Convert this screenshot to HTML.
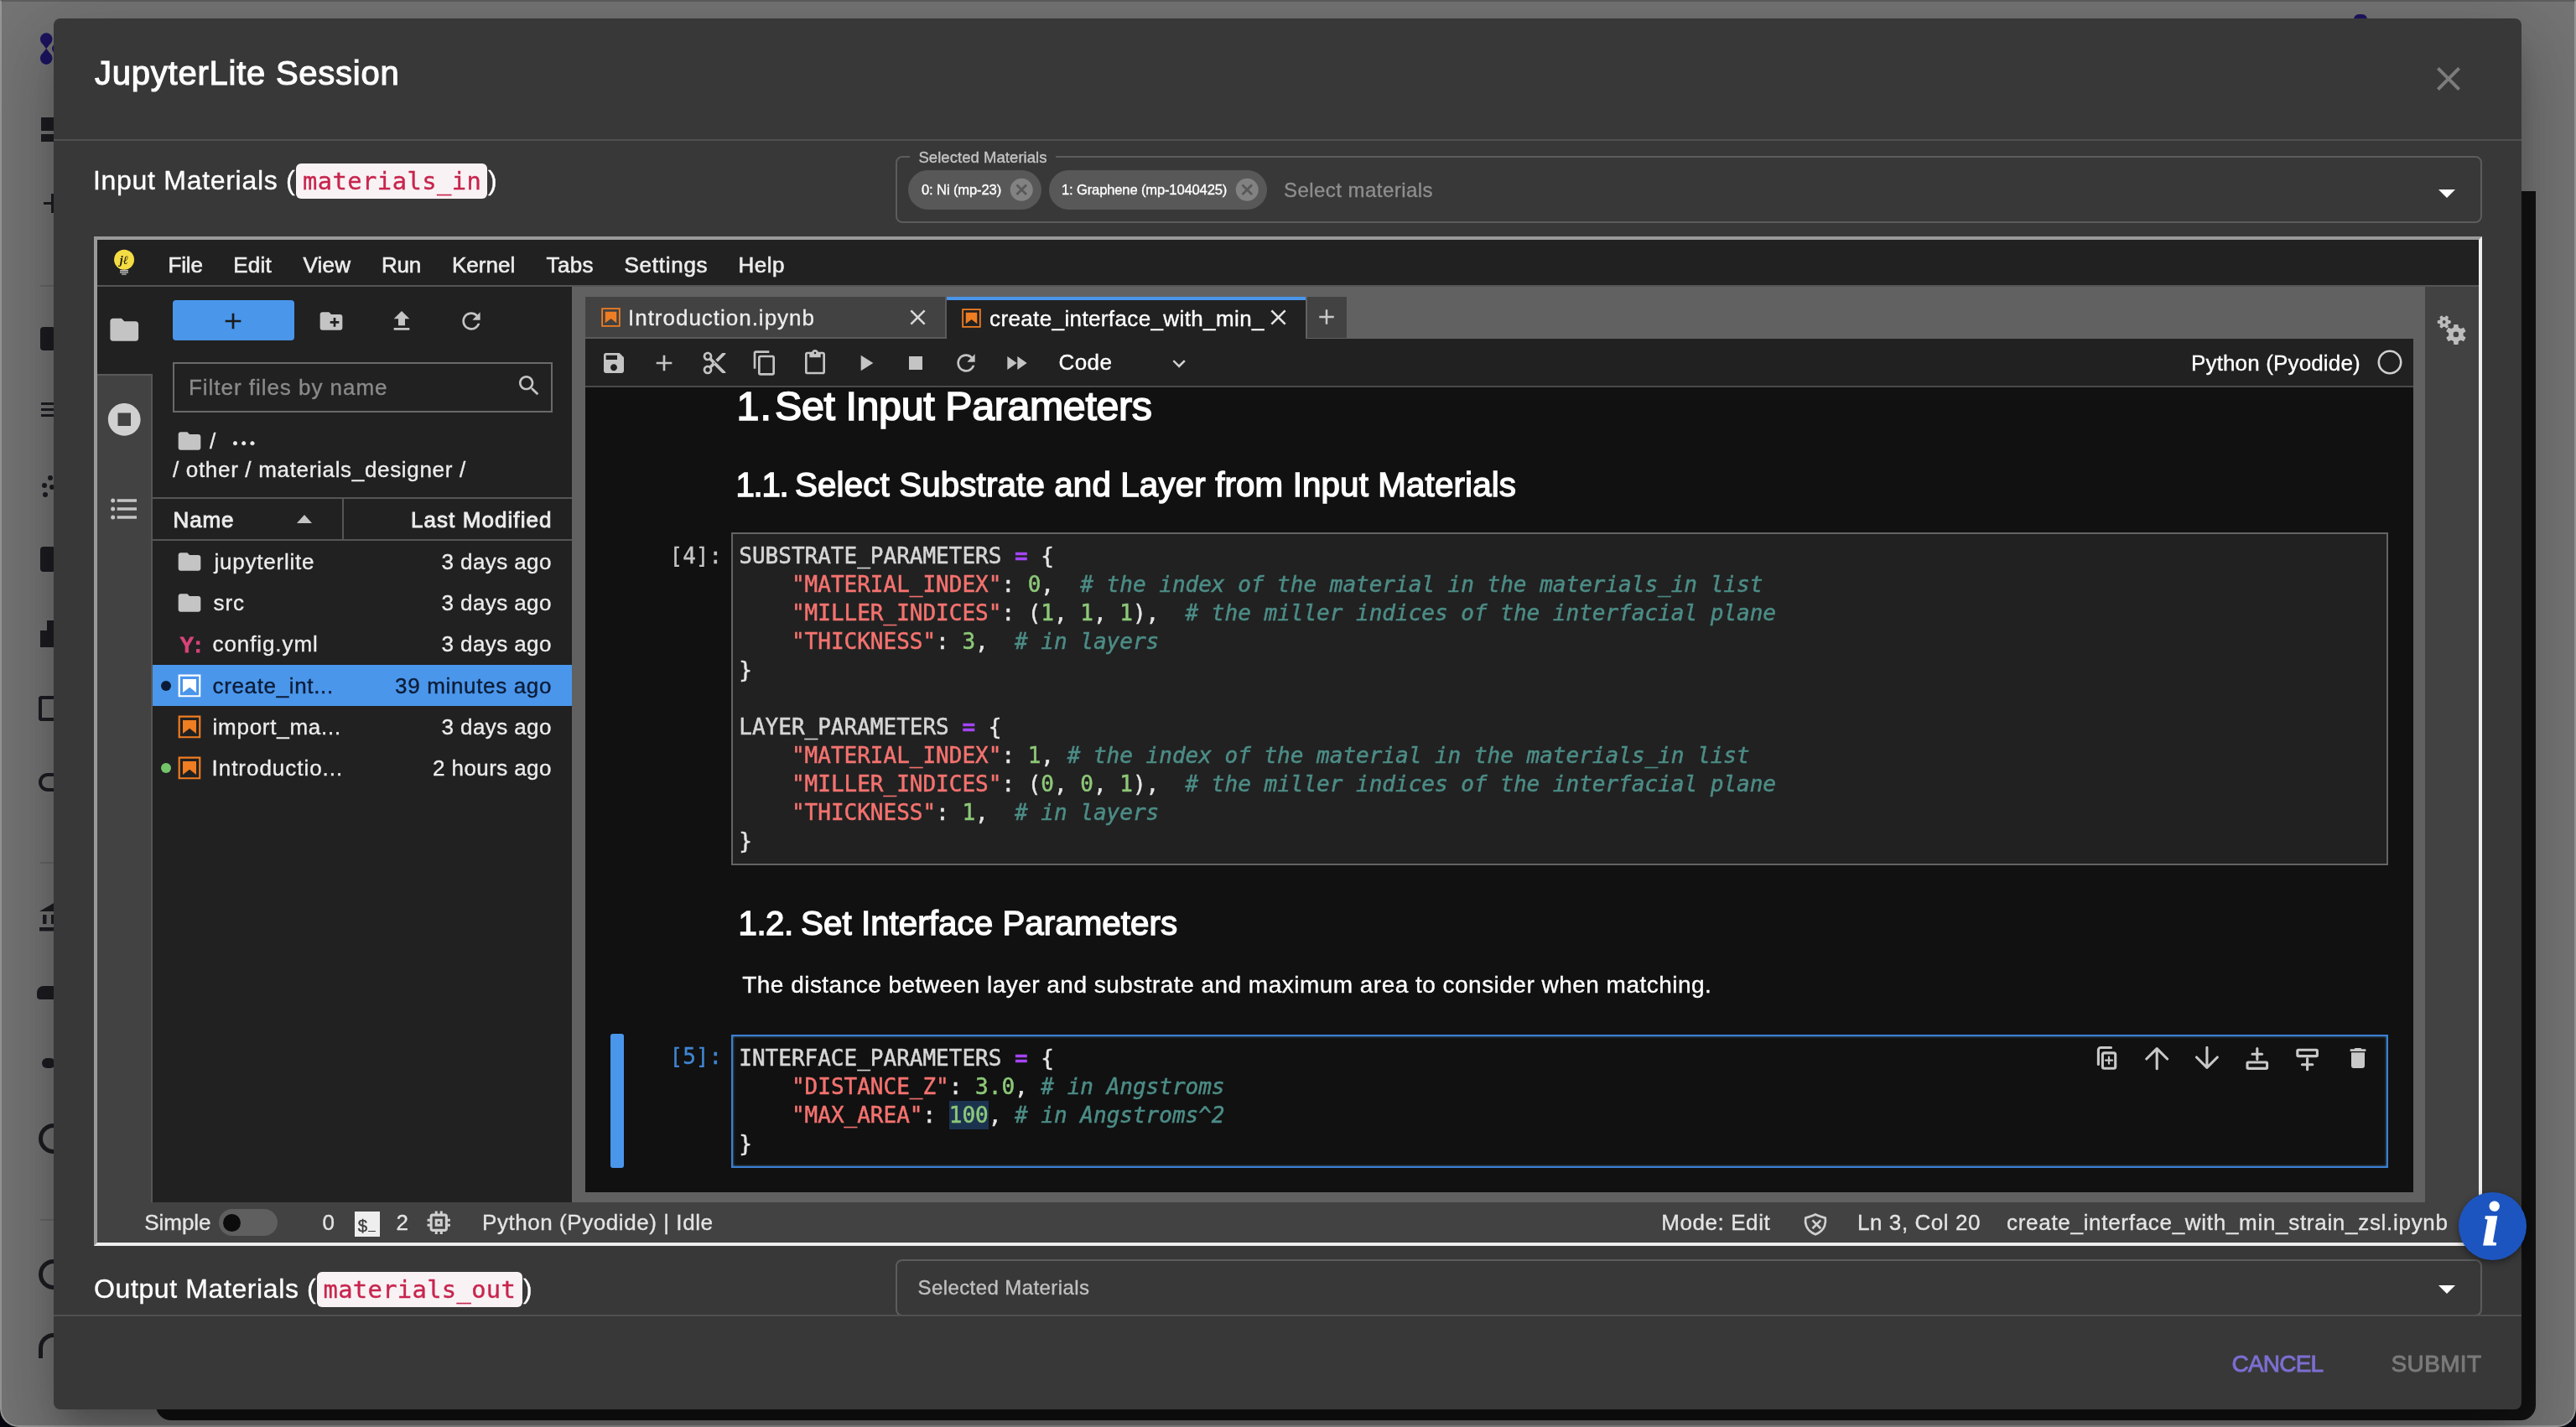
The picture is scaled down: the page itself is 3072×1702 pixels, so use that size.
<!DOCTYPE html>
<html lang="en"><head><meta charset="utf-8"><title>JupyterLite Session</title>
<style>
html,body{margin:0;padding:0}
body{width:3072px;height:1702px;position:relative;overflow:hidden;background:#07070f;filter:brightness(1.0001);font-family:"Liberation Sans",Arial,sans-serif}
body>div,body>svg,body>span{position:absolute;display:block}
.t{white-space:pre;line-height:1;-webkit-text-stroke-width:.35px}
svg{overflow:visible}
</style></head><body>
<div style="left:0px;top:0px;width:3072px;height:1702px;background:#747474;box-sizing:border-box;border:2px solid #979797;border-top-color:#5e5e5e;border-radius:0 0 22px 22px;"></div>
<div style="left:186px;top:228px;width:2838px;height:1466px;background:#131313;border-radius:0 0 18px 18px;"></div>
<svg style="left:40px;top:30px" width="30" height="56" viewBox="40 30 30 56" fill="#1d1560"><circle cx="55.2" cy="46.6" r="7.3"/><path d="M48.500 49.600L61.900 49.600L55.200 58.200Z"/><circle cx="55.2" cy="69.6" r="7.3"/><path d="M48.500 66.600L61.900 66.600L55.200 57.800Z"/><circle cx="68" cy="58" r="6"/></svg>
<div style="left:2807px;top:17px;width:16px;height:8px;background:#1d1560;border-radius:6px 6px 0 0;"></div>
<div style="left:49px;top:139.5px;width:17px;height:16.5px;background:#1c1c22;"></div>
<div style="left:49px;top:159.5px;width:17px;height:9.5px;background:#1c1c22;"></div>
<div style="left:52px;top:240.5px;width:14px;height:3.3px;background:#1c1c22;"></div>
<div style="left:61.2px;top:230.5px;width:3.3px;height:23px;background:#1c1c22;"></div>
<div style="left:48px;top:340px;width:1px;height:1px;background:#1c1c22;"></div>
<div style="left:48px;top:390px;width:18px;height:28px;background:#1c1c22;border-radius:4px;"></div>
<div style="left:49px;top:480px;width:17px;height:3px;background:#1c1c22;"></div>
<div style="left:49px;top:487px;width:17px;height:3px;background:#1c1c22;"></div>
<div style="left:49px;top:494px;width:17px;height:3px;background:#1c1c22;"></div>
<svg style="left:48px;top:566px" width="18" height="30" viewBox="0 0 18 30" fill="#1c1c22"><circle cx="12" cy="4" r="3"/><circle cx="5" cy="13" r="3"/><circle cx="14" cy="15" r="3"/><circle cx="6" cy="24" r="3"/></svg>
<div style="left:48px;top:652px;width:18px;height:30px;background:#1c1c22;border-radius:4px;"></div>
<div style="left:48px;top:752px;width:18px;height:20px;background:#1c1c22;"></div>
<div style="left:56px;top:740px;width:10px;height:14px;background:#1c1c22;"></div>
<div style="left:46px;top:830px;width:20px;height:30px;border:4px solid #1c1c22;border-right:none;border-radius:4px 0 0 4px;box-sizing:border-box;"></div>
<div style="left:46px;top:922px;width:20px;height:22px;border:4px solid #1c1c22;border-right:none;border-radius:12px 0 0 12px;box-sizing:border-box;"></div>
<svg style="left:44px;top:1070px" width="22" height="46" viewBox="44 1070 22 46" fill="#1c1c22"><path d="M47 1087L66 1076V1087Z"/><rect x="51" y="1091" width="4.500" height="11"/><rect x="61" y="1091" width="5" height="11"/><rect x="47" y="1106" width="19" height="4.500"/></svg>
<div style="left:44px;top:1176px;width:22px;height:16px;background:#1c1c22;border-radius:8px 0 0 4px;"></div>
<div style="left:50px;top:1262px;width:16px;height:12px;background:#1c1c22;border-radius:6px;"></div>
<div style="left:46px;top:1340px;width:20px;height:36px;border:5px solid #1c1c22;border-right:none;border-radius:18px 0 0 18px;box-sizing:border-box;"></div>
<div style="left:46px;top:1502px;width:20px;height:36px;border:5px solid #1c1c22;border-right:none;border-radius:18px 0 0 18px;box-sizing:border-box;"></div>
<div style="left:46px;top:1590px;width:20px;height:30px;border:5px solid #1c1c22;border-right:none;border-bottom:none;border-radius:18px 0 0 0;box-sizing:border-box;"></div>
<div style="left:48px;top:340px;width:16px;height:2px;background:#666;"></div>
<div style="left:48px;top:1028px;width:16px;height:2px;background:#666;"></div>
<div style="left:48px;top:1454px;width:16px;height:2px;background:#666;"></div>
<div style="left:64px;top:22px;width:2943px;height:1659px;background:#383838;border-radius:8px;box-shadow:0 22px 30px -14px rgba(0,0,0,.2),0 48px 76px 6px rgba(0,0,0,.14),0 18px 92px 16px rgba(0,0,0,.12);"></div>
<span id="t0" class="t" style="left:113px;top:67px;font:400 40px/1 'Liberation Sans', Arial, sans-serif;color:#fff;letter-spacing:0.759px;-webkit-text-stroke:1.1px #fff;">JupyterLite Session</span>
<svg style="left:2895.5px;top:70.0px;" width="48" height="48" viewBox="0 0 24 24"><path fill="#7c7c7c" d="M19 6.41L17.59 5 12 10.59 6.41 5 5 6.41 10.59 12 5 17.59 6.41 19 12 13.41 17.59 19 19 17.59 13.41 12z"/></svg>
<div style="left:64px;top:166px;width:2943px;height:2px;background:#505050;"></div>
<span id="t1" class="t" style="left:111px;top:199px;font:400 32px/1 'Liberation Sans', Arial, sans-serif;color:#fff;letter-spacing:0.702px;">Input Materials (</span>
<div style="left:353px;top:195px;width:228px;height:42px;background:#f9f2f4;border-radius:6px;"></div>
<span id="t2" class="t" style="left:361px;top:202px;font:400 28.8px/1 'DejaVu Sans Mono', 'Liberation Mono', monospace;color:#c7254e;letter-spacing:0.436px;">materials_in</span>
<span id="t3" class="t" style="left:582px;top:199px;font:400 32px/1 'Liberation Sans', Arial, sans-serif;color:#fff;">)</span>
<div style="left:1068px;top:186px;width:1892px;height:80px;border:2px solid #5c5c5c;border-radius:8px;box-sizing:border-box;"></div>
<div style="left:1085px;top:180px;width:174px;height:14px;background:#383838;"></div>
<span id="t4" class="t" style="left:1095.4px;top:179.3px;font:400 18.5px/1 'Liberation Sans', Arial, sans-serif;color:#c4c4c4;letter-spacing:0.057px;">Selected Materials</span>
<div style="left:1083px;top:202.5px;width:158.5px;height:47px;background:#585858;border-radius:24px;"></div>
<span id="t5" class="t" style="left:1099px;top:219.3px;font:400 16.6px/1 'Liberation Sans', Arial, sans-serif;color:#fff;letter-spacing:-0.132px;">0: Ni (mp-23)</span>
<svg style="left:1201.75px;top:209.75px;" width="32.5" height="32.5" viewBox="0 0 24 24"><path fill="#828282" d="M12 2C6.47 2 2 6.47 2 12s4.47 10 10 10 10-4.47 10-10S17.53 2 12 2zm5 13.59L15.59 17 12 13.41 8.41 17 7 15.59 10.59 12 7 8.41 8.41 7 12 10.59 15.59 7 17 8.41 13.41 12 17 15.59z"/></svg>
<div style="left:1250.5px;top:202.5px;width:260px;height:47px;background:#585858;border-radius:24px;"></div>
<span id="t6" class="t" style="left:1266px;top:219.3px;font:400 16.6px/1 'Liberation Sans', Arial, sans-serif;color:#fff;letter-spacing:-0.164px;">1: Graphene (mp-1040425)</span>
<svg style="left:1470.75px;top:209.75px;" width="32.5" height="32.5" viewBox="0 0 24 24"><path fill="#828282" d="M12 2C6.47 2 2 6.47 2 12s4.47 10 10 10 10-4.47 10-10S17.53 2 12 2zm5 13.59L15.59 17 12 13.41 8.41 17 7 15.59 10.59 12 7 8.41 8.41 7 12 10.59 15.59 7 17 8.41 13.41 12 17 15.59z"/></svg>
<span id="t7" class="t" style="left:1531px;top:214.5px;font:400 24px/1 'Liberation Sans', Arial, sans-serif;color:#8e8e8e;letter-spacing:0.451px;">Select materials</span>
<svg style="left:2894.0px;top:206.0px;" width="48" height="48" viewBox="0 0 24 24"><path fill="#fff" d="M7 10l5 5 5-5z"/></svg>
<div style="left:112px;top:282px;width:2848px;height:1204px;background:#212121;box-sizing:border-box;border:4px solid;border-color:#9a9a9a #eeeeee #eeeeee #9a9a9a;"></div>
<div style="left:116px;top:340px;width:2840px;height:2px;background:#555;"></div>
<svg style="left:130px;top:292px" width="40" height="44" viewBox="130 292 40 44"><circle cx="148.05" cy="309.7" r="12" fill="#f4dc45"/><rect x="143" y="322.100" width="10" height="1.400" fill="#c8c8c8"/><rect x="143" y="324.300" width="10" height="1.400" fill="#bdbdbd"/><rect x="145.100" y="326.400" width="5.600" height="1.400" fill="#b0b0b0"/><text x="147.800" y="314.800" font-family="Liberation Serif, serif" font-style="italic" font-weight="700" font-size="14" text-anchor="middle" fill="#1a1400">jℓ</text></svg>
<span id="t8" class="t" style="left:200.4px;top:302.5px;font:400 26px/1 'Liberation Sans', Arial, sans-serif;color:#ececec;letter-spacing:-0.112px;-webkit-text-stroke:0.6px #ececec;">File</span>
<span id="t9" class="t" style="left:278.2px;top:302.5px;font:400 26px/1 'Liberation Sans', Arial, sans-serif;color:#ececec;letter-spacing:0.241px;-webkit-text-stroke:0.6px #ececec;">Edit</span>
<span id="t10" class="t" style="left:361.5px;top:302.5px;font:400 26px/1 'Liberation Sans', Arial, sans-serif;color:#ececec;letter-spacing:0.231px;-webkit-text-stroke:0.6px #ececec;">View</span>
<span id="t11" class="t" style="left:455px;top:302.5px;font:400 26px/1 'Liberation Sans', Arial, sans-serif;color:#ececec;letter-spacing:-0.218px;-webkit-text-stroke:0.6px #ececec;">Run</span>
<span id="t12" class="t" style="left:538.9px;top:302.5px;font:400 26px/1 'Liberation Sans', Arial, sans-serif;color:#ececec;letter-spacing:0.024px;-webkit-text-stroke:0.6px #ececec;">Kernel</span>
<span id="t13" class="t" style="left:651.5px;top:302.5px;font:400 26px/1 'Liberation Sans', Arial, sans-serif;color:#ececec;letter-spacing:0.393px;-webkit-text-stroke:0.6px #ececec;">Tabs</span>
<span id="t14" class="t" style="left:744.5px;top:302.5px;font:400 26px/1 'Liberation Sans', Arial, sans-serif;color:#ececec;letter-spacing:0.736px;-webkit-text-stroke:0.6px #ececec;">Settings</span>
<span id="t15" class="t" style="left:880.5px;top:302.5px;font:400 26px/1 'Liberation Sans', Arial, sans-serif;color:#ececec;letter-spacing:0.496px;-webkit-text-stroke:0.6px #ececec;">Help</span>
<div style="left:116px;top:342px;width:66px;height:1092px;background:#424242;"></div>
<div style="left:116px;top:342px;width:66px;height:105px;background:#212121;"></div>
<div style="left:116px;top:446px;width:66px;height:2px;background:#5a5a5a;"></div>
<div style="left:180px;top:446px;width:2px;height:988px;background:#555;"></div>
<svg style="left:127.75px;top:372.75px;" width="40.5" height="40.5" viewBox="0 0 24 24"><path fill="#c4c4c4" d="M10 4H4c-1.1 0-1.99.9-1.99 2L2 18c0 1.1.9 2 2 2h16c1.1 0 2-.9 2-2V8c0-1.1-.9-2-2-2h-8l-2-2z"/></svg>
<svg style="left:124.75px;top:476.75px;" width="46.5" height="46.5" viewBox="0 0 24 24"><path fill="#d0d0d0" d="M12 2C6.47 2 2 6.47 2 12s4.47 10 10 10 10-4.47 10-10S17.53 2 12 2zm4 14H8V8h8v8z"/></svg>
<svg style="left:127.5px;top:586.5px;" width="40" height="40" viewBox="0 0 24 24"><path fill="#c4c4c4" d="M7,5H21V7H7V5M7,13V11H21V13H7M4,4.5A1.5,1.5 0 0,1 5.5,6A1.5,1.5 0 0,1 4,7.5A1.5,1.5 0 0,1 2.5,6A1.5,1.5 0 0,1 4,4.5M4,10.5A1.5,1.5 0 0,1 5.5,12A1.5,1.5 0 0,1 4,13.5A1.5,1.5 0 0,1 2.5,12A1.5,1.5 0 0,1 4,10.5M7,19V17H21V19H7M4,16.5A1.5,1.5 0 0,1 5.5,18A1.5,1.5 0 0,1 4,19.5A1.5,1.5 0 0,1 2.5,18A1.5,1.5 0 0,1 4,16.5Z"/></svg>
<div style="left:206px;top:358px;width:144.5px;height:48px;background:#4a96eb;border-radius:4px;"></div>
<svg style="left:262.0px;top:367.0px;" width="32" height="32" viewBox="0 0 24 24"><path fill="#1a1a1a" d="M19 13h-6v6h-2v-6H5v-2h6V5h2v6h6v2z"/></svg>
<svg style="left:379.0px;top:367.0px;" width="32" height="32" viewBox="0 0 24 24"><path fill="#c4c4c4" d="M20 6h-8l-2-2H4c-1.11 0-1.99.89-1.99 2L2 18c0 1.11.89 2 2 2h16c1.11 0 2-.89 2-2V8c0-1.11-.89-2-2-2zm-1 8h-3v3h-2v-3h-3v-2h3V9h2v3h3v2z"/></svg>
<svg style="left:462.5px;top:367.0px;" width="32" height="32" viewBox="0 0 24 24"><path fill="#c4c4c4" d="M9 16h6v-6h4l-7-7-7 7h4zm-4 2h14v2H5z"/></svg>
<svg style="left:546.0px;top:367.0px;" width="32" height="32" viewBox="0 0 24 24"><path fill="#c4c4c4" d="M17.65 6.35C16.2 4.9 14.21 4 12 4c-4.42 0-7.99 3.58-7.99 8s3.57 8 7.99 8c3.73 0 6.84-2.55 7.73-6h-2.08c-.82 2.33-3.04 4-5.65 4-3.31 0-6-2.69-6-6s2.69-6 6-6c1.66 0 3.14.69 4.22 1.78L13 11h7V4l-2.35 2.35z"/></svg>
<div style="left:206px;top:432px;width:453px;height:60px;border:2px solid #6a6a6a;box-sizing:border-box;"></div>
<span id="t16" class="t" style="left:225px;top:448.5px;font:400 26px/1 'Liberation Sans', Arial, sans-serif;color:#8a8a8a;letter-spacing:0.962px;">Filter files by name</span>
<svg style="left:615.0px;top:444.0px;" width="32" height="32" viewBox="0 0 24 24"><path fill="#c4c4c4" d="M15.5 14h-.79l-.28-.27C15.41 12.59 16 11.11 16 9.5 16 5.91 13.09 3 9.5 3S3 5.91 3 9.5 5.91 16 9.5 16c1.61 0 3.09-.59 4.23-1.57l.27.28v.79l5 4.99L20.49 19l-4.99-5zm-6 0C7.01 14 5 11.99 5 9.5S7.01 5 9.5 5 14 7.01 14 9.5 11.99 14 9.5 14z"/></svg>
<svg style="left:210.0px;top:509.5px;" width="32" height="32" viewBox="0 0 24 24"><path fill="#c4c4c4" d="M10 4H4c-1.1 0-1.99.9-1.99 2L2 18c0 1.1.9 2 2 2h16c1.1 0 2-.9 2-2V8c0-1.1-.9-2-2-2h-8l-2-2z"/></svg>
<span id="t17" class="t" style="left:250px;top:513px;font:400 26px/1 'Liberation Sans', Arial, sans-serif;color:#ececec;">/</span>
<span id="t18" class="t" style="left:277.5px;top:519.5px;font:400 17px/1 'Liberation Sans', Arial, sans-serif;color:#ececec;letter-spacing:4.298px;">•••</span>
<span id="t19" class="t" style="left:206px;top:546.5px;font:400 26px/1 'Liberation Sans', Arial, sans-serif;color:#ececec;letter-spacing:0.680px;">/ other / materials_designer /</span>
<div style="left:182px;top:593px;width:500px;height:2px;background:#555;"></div>
<div style="left:182px;top:643px;width:500px;height:2px;background:#555;"></div>
<div style="left:408px;top:595px;width:2px;height:48px;background:#555;"></div>
<span id="t20" class="t" style="left:206.5px;top:606.5px;font:400 26px/1 'Liberation Sans', Arial, sans-serif;color:#ececec;letter-spacing:0.868px;-webkit-text-stroke:0.9px #ececec;">Name</span>
<span id="t21" class="t" style="left:490px;top:606.5px;font:400 26px/1 'Liberation Sans', Arial, sans-serif;color:#ececec;letter-spacing:1.068px;-webkit-text-stroke:0.9px #ececec;">Last Modified</span>
<svg style="left:354px;top:614px" width="18" height="10" viewBox="0 0 18 10"><path fill="#c4c4c4" d="M0 10 L9 0 L18 10z"/></svg>
<svg style="left:210.0px;top:653.85px;" width="32" height="32" viewBox="0 0 24 24"><path fill="#c4c4c4" d="M10 4H4c-1.1 0-1.99.9-1.99 2L2 18c0 1.1.9 2 2 2h16c1.1 0 2-.9 2-2V8c0-1.1-.9-2-2-2h-8l-2-2z"/></svg>
<span id="t22" class="t" style="left:255.5px;top:656.65px;font:400 26px/1 'Liberation Sans', Arial, sans-serif;color:#ececec;letter-spacing:0.769px;">jupyterlite</span>
<span id="t23" class="t" style="left:526.5px;top:656.65px;font:400 26px/1 'Liberation Sans', Arial, sans-serif;color:#ececec;letter-spacing:0.417px;">3 days ago</span>
<svg style="left:210.0px;top:703.15px;" width="32" height="32" viewBox="0 0 24 24"><path fill="#c4c4c4" d="M10 4H4c-1.1 0-1.99.9-1.99 2L2 18c0 1.1.9 2 2 2h16c1.1 0 2-.9 2-2V8c0-1.1-.9-2-2-2h-8l-2-2z"/></svg>
<span id="t24" class="t" style="left:254.5px;top:705.95px;font:400 26px/1 'Liberation Sans', Arial, sans-serif;color:#ececec;letter-spacing:0.921px;">src</span>
<span id="t25" class="t" style="left:526.5px;top:705.95px;font:400 26px/1 'Liberation Sans', Arial, sans-serif;color:#ececec;letter-spacing:0.417px;">3 days ago</span>
<span id="t26" class="t" style="left:214.5px;top:757.45px;font:700 25px/1 'Liberation Sans', Arial, sans-serif;color:#d8437a;letter-spacing:2.681px;-webkit-text-stroke:0.8px #d8437a;">Y:</span>
<span id="t27" class="t" style="left:253.5px;top:755.25px;font:400 26px/1 'Liberation Sans', Arial, sans-serif;color:#ececec;letter-spacing:0.915px;">config.yml</span>
<span id="t28" class="t" style="left:526.5px;top:755.25px;font:400 26px/1 'Liberation Sans', Arial, sans-serif;color:#ececec;letter-spacing:0.417px;">3 days ago</span>
<div style="left:182px;top:793.1px;width:500px;height:49.3px;background:#4a96eb;"></div>
<svg style="left:210.0px;top:801.75px;" width="32" height="32" viewBox="0 0 22 22"><g fill="#ffffff"><path d="M18.7 3.3v15.4H3.3V3.3h15.4m1.5-1.5H1.8v18.3h18.3l.1-18.3z"/><path d="M16.5 16.5l-5.4-4.3-5.6 4.3v-11h11z"/></g></svg>
<div style="left:191.5px;top:811.75px;width:12px;height:12px;background:#0c1c36;border-radius:50%;"></div>
<span id="t29" class="t" style="left:253.5px;top:804.55px;font:400 26px/1 'Liberation Sans', Arial, sans-serif;color:#0c1c36;letter-spacing:0.656px;">create_int...</span>
<span id="t30" class="t" style="left:471px;top:804.55px;font:400 26px/1 'Liberation Sans', Arial, sans-serif;color:#0c1c36;letter-spacing:0.667px;">39 minutes ago</span>
<svg style="left:210.0px;top:851.05px;" width="32" height="32" viewBox="0 0 22 22"><g fill="#ef7d22"><path d="M18.7 3.3v15.4H3.3V3.3h15.4m1.5-1.5H1.8v18.3h18.3l.1-18.3z"/><path d="M16.5 16.5l-5.4-4.3-5.6 4.3v-11h11z"/></g></svg>
<span id="t31" class="t" style="left:253.5px;top:853.85px;font:400 26px/1 'Liberation Sans', Arial, sans-serif;color:#ececec;letter-spacing:0.749px;">import_ma...</span>
<span id="t32" class="t" style="left:526.5px;top:853.85px;font:400 26px/1 'Liberation Sans', Arial, sans-serif;color:#ececec;letter-spacing:0.417px;">3 days ago</span>
<svg style="left:210.0px;top:900.35px;" width="32" height="32" viewBox="0 0 22 22"><g fill="#ef7d22"><path d="M18.7 3.3v15.4H3.3V3.3h15.4m1.5-1.5H1.8v18.3h18.3l.1-18.3z"/><path d="M16.5 16.5l-5.4-4.3-5.6 4.3v-11h11z"/></g></svg>
<div style="left:191.5px;top:910.35px;width:12px;height:12px;background:#74c46a;border-radius:50%;"></div>
<span id="t33" class="t" style="left:252.5px;top:903.15px;font:400 26px/1 'Liberation Sans', Arial, sans-serif;color:#ececec;letter-spacing:0.973px;">Introductio...</span>
<span id="t34" class="t" style="left:516px;top:903.15px;font:400 26px/1 'Liberation Sans', Arial, sans-serif;color:#ececec;letter-spacing:0.413px;">2 hours ago</span>
<div style="left:682px;top:342px;width:2210px;height:1092px;background:#616161;"></div>
<div style="left:2892px;top:342px;width:64px;height:1092px;background:#424242;"></div>
<div style="left:698px;top:354px;width:430px;height:49px;background:#424242;"></div>
<div style="left:698px;top:402px;width:430px;height:1.5px;background:#5a5a5a;"></div>
<div style="left:1127px;top:354px;width:1.5px;height:49px;background:#5a5a5a;"></div>
<svg style="left:714.5px;top:365.0px;" width="27" height="27" viewBox="0 0 22 22"><g fill="#ef7d22"><path d="M18.7 3.3v15.4H3.3V3.3h15.4m1.5-1.5H1.8v18.3h18.3l.1-18.3z"/><path d="M16.5 16.5l-5.4-4.3-5.6 4.3v-11h11z"/></g></svg>
<span id="t35" class="t" style="left:749px;top:366px;font:400 26px/1 'Liberation Sans', Arial, sans-serif;color:#ececec;letter-spacing:0.983px;">Introduction.ipynb</span>
<svg style="left:1079.0px;top:362.5px;" width="31" height="31" viewBox="0 0 24 24"><path fill="#d8d8d8" d="M19 6.41L17.59 5 12 10.59 6.41 5 5 6.41 10.59 12 5 17.59 6.41 19 12 13.41 17.59 19 19 17.59 13.41 12z"/></svg>
<div style="left:1128.5px;top:354px;width:428px;height:50px;background:#212121;"></div>
<div style="left:1128.5px;top:354px;width:428px;height:4px;background:#4a96eb;"></div>
<svg style="left:1144.5px;top:365.5px;" width="27" height="27" viewBox="0 0 22 22"><g fill="#ef7d22"><path d="M18.7 3.3v15.4H3.3V3.3h15.4m1.5-1.5H1.8v18.3h18.3l.1-18.3z"/><path d="M16.5 16.5l-5.4-4.3-5.6 4.3v-11h11z"/></g></svg>
<span id="t36" class="t" style="left:1180px;top:367px;font:400 26px/1 'Liberation Sans', Arial, sans-serif;color:#fff;letter-spacing:0.380px;">create_interface_with_min_</span>
<svg style="left:1508.5px;top:363.0px;" width="31" height="31" viewBox="0 0 24 24"><path fill="#e4e4e4" d="M19 6.41L17.59 5 12 10.59 6.41 5 5 6.41 10.59 12 5 17.59 6.41 19 12 13.41 17.59 19 19 17.59 13.41 12z"/></svg>
<div style="left:1558.5px;top:354px;width:47.5px;height:49px;background:#424242;"></div>
<svg style="left:1567.0px;top:363.0px;" width="30" height="30" viewBox="0 0 24 24"><path fill="#c8c8c8" d="M19 13h-6v6h-2v-6H5v-2h6V5h2v6h6v2z"/></svg>
<div style="left:698px;top:403.5px;width:2180px;height:58px;background:#212121;"></div>
<div style="left:698px;top:460px;width:2180px;height:2px;background:#4a4a4a;"></div>
<svg style="left:715.7px;top:417.0px;" width="32" height="32" viewBox="0 0 24 24"><path fill="#c4c4c4" d="M17 3H5c-1.11 0-2 .9-2 2v14c0 1.1.89 2 2 2h14c1.1 0 2-.9 2-2V7l-4-4zm-5 16c-1.66 0-3-1.34-3-3s1.34-3 3-3 3 1.34 3 3-1.34 3-3 3zm3-10H5V5h10v4z"/></svg>
<svg style="left:775.7px;top:417.0px;" width="32" height="32" viewBox="0 0 24 24"><path fill="#c4c4c4" d="M19 13h-6v6h-2v-6H5v-2h6V5h2v6h6v2z"/></svg>
<svg style="left:835.7px;top:417.0px;" width="32" height="32" viewBox="0 0 24 24"><path fill="#c4c4c4" d="M9.64 7.64c.23-.5.36-1.05.36-1.64 0-2.21-1.79-4-4-4S2 3.79 2 6s1.79 4 4 4c.59 0 1.14-.13 1.64-.36L10 12l-2.36 2.36C7.14 14.13 6.59 14 6 14c-2.21 0-4 1.79-4 4s1.79 4 4 4 4-1.79 4-4c0-.59-.13-1.14-.36-1.64L12 14l7 7h3v-1L9.64 7.64zM6 8c-1.1 0-2-.89-2-2s.9-2 2-2 2 .89 2 2-.9 2-2 2zm0 12c-1.1 0-2-.89-2-2s.9-2 2-2 2 .89 2 2-.9 2-2 2zm6-7.5c-.28 0-.5-.22-.5-.5s.22-.5.5-.5.5.22.5.5-.22.5-.5.5zM19 3l-6 6 2 2 7-7V3z"/></svg>
<svg style="left:895.7px;top:417.0px;" width="32" height="32" viewBox="0 0 24 24"><path fill="#c4c4c4" d="M16 1H4c-1.1 0-2 .9-2 2v14h2V3h12V1zm3 4H8c-1.1 0-2 .9-2 2v14c0 1.1.9 2 2 2h11c1.1 0 2-.9 2-2V7c0-1.1-.9-2-2-2zm0 16H8V7h11v14z"/></svg>
<svg style="left:955.7px;top:417.0px;" width="32" height="32" viewBox="0 0 24 24"><path fill="#c4c4c4" d="M19 2h-4.18C14.4.84 13.3 0 12 0c-1.3 0-2.4.84-2.82 2H5c-1.1 0-2 .9-2 2v16c0 1.1.9 2 2 2h14c1.1 0 2-.9 2-2V4c0-1.1-.9-2-2-2zm-7 0c.55 0 1 .45 1 1s-.45 1-1 1-1-.45-1-1 .45-1 1-1zm7 18H5V4h2v3h10V4h2v16z"/></svg>
<svg style="left:1015.7px;top:417.0px;" width="32" height="32" viewBox="0 0 24 24"><path fill="#c4c4c4" d="M8 5v14l11-7z"/></svg>
<svg style="left:1075.7px;top:417.0px;" width="32" height="32" viewBox="0 0 24 24"><path fill="#c4c4c4" d="M6 6h12v12H6z"/></svg>
<svg style="left:1135.7px;top:417.0px;" width="32" height="32" viewBox="0 0 24 24"><path fill="#c4c4c4" d="M17.65 6.35C16.2 4.9 14.21 4 12 4c-4.42 0-7.99 3.58-7.99 8s3.57 8 7.99 8c3.73 0 6.84-2.55 7.73-6h-2.08c-.82 2.33-3.04 4-5.65 4-3.31 0-6-2.69-6-6s2.69-6 6-6c1.66 0 3.14.69 4.22 1.78L13 11h7V4l-2.35 2.35z"/></svg>
<svg style="left:1195.7px;top:417.0px;" width="32" height="32" viewBox="0 0 24 24"><path fill="#c4c4c4" d="M4 18l8.5-6L4 6v12zm9-12v12l8.5-6L13 6z"/></svg>
<span id="t37" class="t" style="left:1262.5px;top:419px;font:400 26px/1 'Liberation Sans', Arial, sans-serif;color:#fff;letter-spacing:0.435px;">Code</span>
<svg style="left:1392.0px;top:420.0px;" width="28" height="28" viewBox="0 0 18 18"><path fill="#d0d0d0" d="M5.2,5.9L9,9.7l3.8-3.8l1.2,1.2l-4.9,5l-4.9-5L5.2,5.9z"/></svg>
<span id="t38" class="t" style="left:2613px;top:419.5px;font:400 26px/1 'Liberation Sans', Arial, sans-serif;color:#fff;letter-spacing:0.148px;">Python (Pyodide)</span>
<svg style="left:2834px;top:416px" width="32" height="32" viewBox="0 0 32 32"><circle cx="16" cy="16" r="13.2" fill="none" stroke="#d0d0d0" stroke-width="2.6"/></svg>
<div style="left:698px;top:462px;width:2180px;height:960px;background:#111111;"></div>
<span id="t39" class="t" style="left:878.5px;top:459.5px;font:400 48.4px/1 'Liberation Sans', Arial, sans-serif;color:#ffffff;letter-spacing:1.087px;-webkit-text-stroke:1.6px #ffffff;">1.</span>
<span id="t40" class="t" style="left:924px;top:459.5px;font:400 48.4px/1 'Liberation Sans', Arial, sans-serif;color:#ffffff;letter-spacing:-0.387px;-webkit-text-stroke:1.6px #ffffff;">Set Input Parameters</span>
<span id="t41" class="t" style="left:877.5px;top:559px;font:400 40.3px/1 'Liberation Sans', Arial, sans-serif;color:#ffffff;letter-spacing:-1.339px;-webkit-text-stroke:1.4px #ffffff;">1.1.</span>
<span id="t42" class="t" style="left:948px;top:559px;font:400 40.3px/1 'Liberation Sans', Arial, sans-serif;color:#ffffff;letter-spacing:0.143px;-webkit-text-stroke:1.4px #ffffff;">Select Substrate and Layer from Input Materials</span>
<span id="t43" class="t" style="left:880.5px;top:1082px;font:400 40.3px/1 'Liberation Sans', Arial, sans-serif;color:#ffffff;letter-spacing:-0.506px;-webkit-text-stroke:1.4px #ffffff;">1.2.</span>
<span id="t44" class="t" style="left:955px;top:1082px;font:400 40.3px/1 'Liberation Sans', Arial, sans-serif;color:#ffffff;letter-spacing:0.052px;-webkit-text-stroke:1.4px #ffffff;">Set Interface Parameters</span>
<span id="t45" class="t" style="left:885.2px;top:1161px;font:400 28px/1 'Liberation Sans', Arial, sans-serif;color:#ffffff;letter-spacing:0.478px;">The distance between layer and substrate and maximum area to consider when matching.</span>
<div style="left:872px;top:635px;width:1976px;height:397px;background:#212121;box-sizing:border-box;border:2px solid #646464;"></div>
<span id="t46" class="t" style="left:798.5px;top:649.5px;font:400 26px/1 'DejaVu Sans Mono', 'Liberation Mono', monospace;color:#c4c4c4;">[4]:</span>
<span class="t" style="left:881.3px;top:650.3px;font:26px/1 'DejaVu Sans Mono', 'Liberation Mono', monospace;color:#d6d6d6;-webkit-text-stroke-width:.5px"><span style="color:#d6d6d6">SUBSTRATE_PARAMETERS</span> <b style="color:#a445f7">=</b> <span style="color:#e6e6e6">{</span></span>
<span class="t" style="left:881.3px;top:684.3px;font:26px/1 'DejaVu Sans Mono', 'Liberation Mono', monospace;color:#d6d6d6;-webkit-text-stroke-width:.5px">    <span style="color:#f4726f">"MATERIAL_INDEX"</span><span style="color:#e6e6e6">:</span> <span style="color:#8dc878">0</span><span style="color:#e6e6e6">,</span>  <i style="color:#4c8c86"># the index of the material in the materials_in list</i></span>
<span class="t" style="left:881.3px;top:718.3px;font:26px/1 'DejaVu Sans Mono', 'Liberation Mono', monospace;color:#d6d6d6;-webkit-text-stroke-width:.5px">    <span style="color:#f4726f">"MILLER_INDICES"</span><span style="color:#e6e6e6">:</span> <span style="color:#e6e6e6">(</span><span style="color:#8dc878">1</span><span style="color:#e6e6e6">,</span> <span style="color:#8dc878">1</span><span style="color:#e6e6e6">,</span> <span style="color:#8dc878">1</span><span style="color:#e6e6e6">),</span>  <i style="color:#4c8c86"># the miller indices of the interfacial plane</i></span>
<span class="t" style="left:881.3px;top:752.3px;font:26px/1 'DejaVu Sans Mono', 'Liberation Mono', monospace;color:#d6d6d6;-webkit-text-stroke-width:.5px">    <span style="color:#f4726f">"THICKNESS"</span><span style="color:#e6e6e6">:</span> <span style="color:#8dc878">3</span><span style="color:#e6e6e6">,</span>  <i style="color:#4c8c86"># in layers</i></span>
<span class="t" style="left:881.3px;top:786.3px;font:26px/1 'DejaVu Sans Mono', 'Liberation Mono', monospace;color:#d6d6d6;-webkit-text-stroke-width:.5px"><span style="color:#e6e6e6">}</span></span>
<span class="t" style="left:881.3px;top:854.3px;font:26px/1 'DejaVu Sans Mono', 'Liberation Mono', monospace;color:#d6d6d6;-webkit-text-stroke-width:.5px"><span style="color:#d6d6d6">LAYER_PARAMETERS</span> <b style="color:#a445f7">=</b> <span style="color:#e6e6e6">{</span></span>
<span class="t" style="left:881.3px;top:888.3px;font:26px/1 'DejaVu Sans Mono', 'Liberation Mono', monospace;color:#d6d6d6;-webkit-text-stroke-width:.5px">    <span style="color:#f4726f">"MATERIAL_INDEX"</span><span style="color:#e6e6e6">:</span> <span style="color:#8dc878">1</span><span style="color:#e6e6e6">,</span> <i style="color:#4c8c86"># the index of the material in the materials_in list</i></span>
<span class="t" style="left:881.3px;top:922.3px;font:26px/1 'DejaVu Sans Mono', 'Liberation Mono', monospace;color:#d6d6d6;-webkit-text-stroke-width:.5px">    <span style="color:#f4726f">"MILLER_INDICES"</span><span style="color:#e6e6e6">:</span> <span style="color:#e6e6e6">(</span><span style="color:#8dc878">0</span><span style="color:#e6e6e6">,</span> <span style="color:#8dc878">0</span><span style="color:#e6e6e6">,</span> <span style="color:#8dc878">1</span><span style="color:#e6e6e6">),</span>  <i style="color:#4c8c86"># the miller indices of the interfacial plane</i></span>
<span class="t" style="left:881.3px;top:956.3px;font:26px/1 'DejaVu Sans Mono', 'Liberation Mono', monospace;color:#d6d6d6;-webkit-text-stroke-width:.5px">    <span style="color:#f4726f">"THICKNESS"</span><span style="color:#e6e6e6">:</span> <span style="color:#8dc878">1</span><span style="color:#e6e6e6">,</span>  <i style="color:#4c8c86"># in layers</i></span>
<span class="t" style="left:881.3px;top:990.3px;font:26px/1 'DejaVu Sans Mono', 'Liberation Mono', monospace;color:#d6d6d6;-webkit-text-stroke-width:.5px"><span style="color:#e6e6e6">}</span></span>
<div style="left:727.8px;top:1233px;width:16px;height:160px;background:#4a96eb;border-radius:3px;"></div>
<div style="left:871.5px;top:1234px;width:1976px;height:159px;background:#111111;box-sizing:border-box;border:2px solid #3b7fd2;box-shadow:inset 0 0 3px rgba(100,181,246,.75);"></div>
<span id="t47" class="t" style="left:798.5px;top:1247.3px;font:400 26px/1 'DejaVu Sans Mono', 'Liberation Mono', monospace;color:#3f86d2;">[5]:</span>
<div style="left:1131.8px;top:1313px;width:47.0px;height:34px;background:#1c3350;"></div>
<span class="t" style="left:881.3px;top:1248.9px;font:26px/1 'DejaVu Sans Mono', 'Liberation Mono', monospace;color:#d6d6d6;-webkit-text-stroke-width:.5px"><span style="color:#d6d6d6">INTERFACE_PARAMETERS</span> <b style="color:#a445f7">=</b> <span style="color:#e6e6e6">{</span></span>
<span class="t" style="left:881.3px;top:1282.9px;font:26px/1 'DejaVu Sans Mono', 'Liberation Mono', monospace;color:#d6d6d6;-webkit-text-stroke-width:.5px">    <span style="color:#f4726f">"DISTANCE_Z"</span><span style="color:#e6e6e6">:</span> <span style="color:#8dc878">3.0</span><span style="color:#e6e6e6">,</span> <i style="color:#4c8c86"># in Angstroms</i></span>
<span class="t" style="left:881.3px;top:1316.9px;font:26px/1 'DejaVu Sans Mono', 'Liberation Mono', monospace;color:#d6d6d6;-webkit-text-stroke-width:.5px">    <span style="color:#f4726f">"MAX_AREA"</span><span style="color:#e6e6e6">:</span> <span style="color:#8dc878">100</span><span style="color:#e6e6e6">,</span> <i style="color:#4c8c86"># in Angstroms^2</i></span>
<span class="t" style="left:881.3px;top:1350.9px;font:26px/1 'DejaVu Sans Mono', 'Liberation Mono', monospace;color:#d6d6d6;-webkit-text-stroke-width:.5px"><span style="color:#e6e6e6">}</span></span>
<svg style="left:2490px;top:1240px" width="320" height="50" viewBox="2490 1240 320 50" fill="none" stroke="#c8c8c8" stroke-width="3.1" stroke-linecap="round" stroke-linejoin="round"><path d="M2517.500 1249.500H2505.200a2.800 2.800 0 0 0-2.800 2.800V1269.500"/><rect x="2507.400" y="1255.900" width="15.300" height="18.300" rx="2"/><path d="M2515 1260.700v8M2511 1264.700h8" stroke-width="2.300"/><path d="M2572.200 1274.800V1250.800M2559.800 1263L2572.200 1250.600L2584.600 1263"/><path d="M2631.900 1249.200V1273.200M2619.500 1261L2631.900 1273.400L2644.300 1261"/><rect x="2680" y="1267" width="23.600" height="7.400" rx="1.200"/><path d="M2691.800 1250.600V1263.500M2686 1257.300H2697.600"/><rect x="2739.800" y="1252.200" width="23.600" height="7.400" rx="1.200"/><path d="M2751.600 1262.500V1275.800M2745.400 1269.800H2757.800"/></svg>
<svg style="left:2796.3px;top:1246.3px;" width="32" height="32" viewBox="0 0 24 24"><path fill="#c8c8c8" d="M6 19c0 1.1.9 2 2 2h8c1.1 0 2-.9 2-2V7H6v12zM19 4h-3.5l-1-1h-5l-1 1H5v2h14V4z"/></svg>
<svg style="left:2892px;top:350px" width="64" height="90" viewBox="2892 350 64 90"><path fill="#bdbdbd" stroke="#bdbdbd" stroke-width="1" stroke-linejoin="round" fill-rule="evenodd" d="M2919.87,382.44 L2922.18,382.65 L2922.18,385.35 L2919.87,385.56 L2918.64,387.70 L2919.61,389.80 L2917.27,391.15 L2915.93,389.26 L2913.47,389.26 L2912.13,391.15 L2909.79,389.80 L2910.76,387.70 L2909.53,385.56 L2907.22,385.35 L2907.22,382.65 L2909.53,382.44 L2910.76,380.30 L2909.79,378.20 L2912.13,376.85 L2913.47,378.74 L2915.93,378.74 L2917.27,376.85 L2919.61,378.20 L2918.64,380.30Z M2917.20,384.00 A2.50,2.50 0 1,0 2912.20,384.00 A2.50,2.50 0 1,0 2917.20,384.00Z"/><path fill="#bdbdbd" stroke="#bdbdbd" stroke-width="1.2" stroke-linejoin="round" fill-rule="evenodd" d="M2931.30,406.85 L2930.95,410.32 L2926.85,410.32 L2926.50,406.85 L2923.22,404.95 L2920.04,406.39 L2917.99,402.83 L2920.82,400.80 L2920.82,397.00 L2917.99,394.97 L2920.04,391.41 L2923.22,392.85 L2926.50,390.95 L2926.85,387.48 L2930.95,387.48 L2931.30,390.95 L2934.58,392.85 L2937.76,391.41 L2939.81,394.97 L2936.98,397.00 L2936.98,400.80 L2939.81,402.83 L2937.76,406.39 L2934.58,404.95Z M2932.80,398.90 A3.90,3.90 0 1,0 2925.00,398.90 A3.90,3.90 0 1,0 2932.80,398.90Z"/></svg>
<div style="left:116px;top:1434px;width:2840px;height:48px;background:#424242;"></div>
<span id="t48" class="t" style="left:172.3px;top:1445.3px;font:400 26px/1 'Liberation Sans', Arial, sans-serif;color:#e4e4e4;letter-spacing:-0.063px;">Simple</span>
<div style="left:261px;top:1442px;width:70px;height:32px;background:#5f5f5f;border-radius:16px;"></div>
<div style="left:266px;top:1447.5px;width:21px;height:21px;background:#0c0c0c;border-radius:50%;"></div>
<span id="t49" class="t" style="left:384.5px;top:1445.3px;font:400 26px/1 'Liberation Sans', Arial, sans-serif;color:#e4e4e4;">0</span>
<div style="left:423px;top:1445px;width:30px;height:30px;background:#eeeeee;"></div>
<span id="t50" class="t" style="left:426.8px;top:1452.3px;font:400 20.5px/1 'Liberation Sans', Arial, sans-serif;color:#3c3c3c;">$</span>
<span id="t51" class="t" style="left:439.2px;top:1454.2px;font:700 15px/1 'Liberation Sans', Arial, sans-serif;color:#3c3c3c;">_</span>
<span id="t52" class="t" style="left:472.5px;top:1445.3px;font:400 26px/1 'Liberation Sans', Arial, sans-serif;color:#e4e4e4;">2</span>
<svg style="left:505.05px;top:1440.05px;" width="36.5" height="36.5" viewBox="0 0 24 24"><path fill="#d0d0d0" d="M15 9H9v6h6V9zm-2 4h-2v-2h2v2zm8-2V9h-2V7c0-1.1-.9-2-2-2h-2V3h-2v2h-2V3H9v2H7c-1.1 0-2 .9-2 2v2H3v2h2v2H3v2h2v2c0 1.1.9 2 2 2h2v2h2v-2h2v2h2v-2h2c1.1 0 2-.9 2-2v-2h2v-2h-2v-2h2zm-4 6H7V7h10v10z"/></svg>
<span id="t53" class="t" style="left:575px;top:1445.3px;font:400 26px/1 'Liberation Sans', Arial, sans-serif;color:#e4e4e4;letter-spacing:0.563px;">Python (Pyodide) | Idle</span>
<span id="t54" class="t" style="left:1981.3px;top:1445.3px;font:400 26px/1 'Liberation Sans', Arial, sans-serif;color:#e4e4e4;letter-spacing:0.571px;">Mode: Edit</span>
<svg style="left:2148.500px;top:1442.500px" width="32" height="32" viewBox="0 0 24 24" fill="none" stroke="#d0d0d0" stroke-width="2"><path transform="translate(2 3)" d="M1.86094 11.4409C0.826448 8.77027 0.863779 6.05764 1.24907 4.19932C2.48206 3.93347 4.08068 3.40347 5.60102 2.8449C7.23549 2.2444 8.85666 1.5815 9.9876 1.09539C11.0597 1.58341 12.6094 2.2444 14.218 2.84339C15.7503 3.41394 17.3995 3.95258 18.7539 4.21385C19.1364 6.07177 19.1709 8.77722 18.139 11.4409C17.0303 14.3032 14.6668 17.1844 9.99999 18.9354C5.3332 17.1844 2.96968 14.3032 1.86094 11.4409Z"/><path transform="translate(9.31592 9.32031)" d="M7.36842 0L0 7.36479"/><path transform="translate(9.31592 16.6836) scale(1 -1)" d="M7.36842 0L0 7.36479"/></svg>
<span id="t55" class="t" style="left:2215px;top:1445.3px;font:400 26px/1 'Liberation Sans', Arial, sans-serif;color:#e4e4e4;letter-spacing:0.568px;">Ln 3, Col 20</span>
<span id="t56" class="t" style="left:2393px;top:1445.3px;font:400 26px/1 'Liberation Sans', Arial, sans-serif;color:#e4e4e4;letter-spacing:0.703px;">create_interface_with_min_strain_zsl.ipynb</span>
<span id="t57" class="t" style="left:112px;top:1520.5px;font:400 32px/1 'Liberation Sans', Arial, sans-serif;color:#fff;letter-spacing:0.608px;">Output Materials (</span>
<div style="left:378px;top:1517px;width:245px;height:42px;background:#f9f2f4;border-radius:6px;"></div>
<span id="t58" class="t" style="left:385.5px;top:1523.5px;font:400 28.8px/1 'DejaVu Sans Mono', 'Liberation Mono', monospace;color:#c7254e;letter-spacing:0.329px;">materials_out</span>
<span id="t59" class="t" style="left:624px;top:1520.5px;font:400 32px/1 'Liberation Sans', Arial, sans-serif;color:#fff;">)</span>
<div style="left:1068px;top:1502px;width:1892px;height:68px;border:2px solid #5c5c5c;border-radius:8px;box-sizing:border-box;"></div>
<span id="t60" class="t" style="left:1094.5px;top:1524.3px;font:400 24px/1 'Liberation Sans', Arial, sans-serif;color:#c0c0c0;letter-spacing:0.416px;">Selected Materials</span>
<svg style="left:2894.0px;top:1512.5px;" width="48" height="48" viewBox="0 0 24 24"><path fill="#fff" d="M7 10l5 5 5-5z"/></svg>
<div style="left:64px;top:1568px;width:2943px;height:105px;background:#383838;"></div>
<div style="left:64px;top:1568px;width:2943px;height:2px;background:#505050;"></div>
<span id="t61" class="t" style="left:2661.5px;top:1613px;font:400 28px/1 'Liberation Sans', Arial, sans-serif;color:#7b6fd0;letter-spacing:-0.803px;-webkit-text-stroke:0.9px #7b6fd0;">CANCEL</span>
<span id="t62" class="t" style="left:2851.5px;top:1613px;font:400 28px/1 'Liberation Sans', Arial, sans-serif;color:#7a7a7a;letter-spacing:0.365px;-webkit-text-stroke:0.9px #7a7a7a;">SUBMIT</span>
<div style="left:2931.5px;top:1421.5px;width:81px;height:81px;background:#1d55c0;border-radius:50%;box-shadow:0 3px 8px rgba(0,0,0,.4);"></div>
<span id="t63" class="t" style="left:2960px;top:1423px;font:italic 700 74px/1 'Liberation Serif', serif;color:#fff;-webkit-text-stroke:1.2px #fff;">i</span>
<script>(function(){var w=window.innerWidth;if(w&&Math.abs(w-3072)>1){document.documentElement.style.overflow="hidden";document.body.style.zoom=w/3072;}})();</script>
</body></html>
